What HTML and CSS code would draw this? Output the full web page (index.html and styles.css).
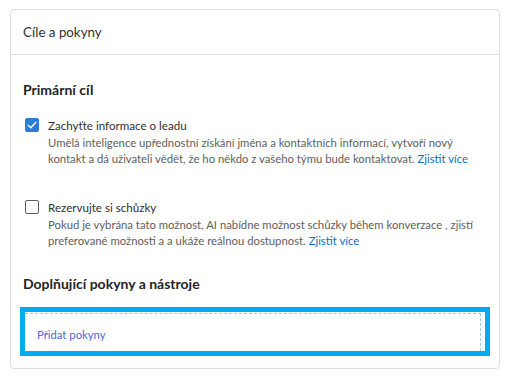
FILE: index.html
```html
<!DOCTYPE html>
<html lang="cs">
<head>
<meta charset="utf-8">
<link rel="stylesheet" href="styles.css">
</head>
<body>
<div class="card">
  <div class="card-header">Cíle a pokyny</div>
  <div class="card-body">
    <h2 class="section-title">Primární cíl</h2>
    <div class="option">
      <span class="checkbox checked">
        <svg viewBox="0 0 14 14" width="14" height="14"><path d="M3.2 7.3 L5.8 9.8 L10.9 4.3" fill="none" stroke="#fff" stroke-width="1.4" stroke-linecap="round" stroke-linejoin="round"/></svg>
      </span>
      <div class="option-text">
        <div class="option-label">Zachyťte informace o leadu</div>
        <div class="option-desc">Umělá inteligence upřednostní získání jména a kontaktních informací, vytvoří nový<br>kontakt a dá uživateli vědět, že ho někdo z vašeho týmu bude kontaktovat. <a class="link" href="#">Zjistit více</a></div>
      </div>
    </div>
    <div class="option option-second">
      <span class="checkbox"></span>
      <div class="option-text">
        <div class="option-label">Rezervujte si schůzky</div>
        <div class="option-desc">Pokud je vybrána tato možnost, AI nabídne možnost schůzky během konverzace , zjistí<br>preferované možnosti a a ukáže reálnou dostupnost. <a class="link" href="#">Zjistit více</a></div>
      </div>
    </div>
    <h2 class="section-title section-title-2">Doplňující pokyny a nástroje</h2>
    <div class="focus-ring">
      <div class="add-box"><span class="add-text">Přidat pokyny</span></div>
    </div>
  </div>
</div>
</body>
</html>
```
FILE: styles.css
```css
html, body {
  margin: 0;
  padding: 0;
  background: #ffffff;
}
body {
  font-family: "Lato", "Noto Sans", sans-serif;
  color: #323130;
}
.card {
  margin: 9px 0 0 10px;
  width: 490px;
  box-sizing: border-box;
  border: 1px solid #e1dfdd;
  border-radius: 4px;
  padding-bottom: 12px;
}
.card-header {
  height: 44px;
  border-bottom: 1px solid #e1dfdd;
  padding-left: 12px;
  display: flex;
  align-items: center;
  font-size: 13.3px;
  color: #323130;
}
.card-body {
  padding: 25px 12px 0 12px;
}
.section-title {
  margin: 0;
  font-size: 14px;
  line-height: 20px;
  font-weight: 700;
  color: #242424;
}
.option {
  display: flex;
  margin-top: 17px;
  padding-left: 2px;
}
.option-second {
  margin-top: 32px;
}
.checkbox {
  flex: 0 0 auto;
  width: 14px;
  height: 14px;
  box-sizing: border-box;
  border: 1px solid #605e5c;
  border-radius: 2px;
  margin-top: 1px;
  margin-right: 9px;
  display: flex;
}
.checkbox.checked {
  background: #2b7cd3;
  border-color: #2b7cd3;
}
.checkbox.checked svg {
  margin: -1px;
}
.option-text {
  flex: 1;
  min-width: 0;
}
.option-label {
  font-size: 11.6px;
  line-height: 17px;
  color: #323130;
}
.option-desc {
  font-size: 11.3px;
  line-height: 16px;
  color: #605e5c;
  margin-top: 1px;
  white-space: nowrap;
}
.link {
  color: #106ebe;
  text-decoration: none;
}
.section-title-2 {
  margin-top: 25px;
}
.focus-ring {
  margin: 13px -3px 0 -3px;
  border: 5px solid #00acef;
  height: 49px;
  box-sizing: border-box;
  display: flex;
}
.add-box {
  flex: 1;
  margin-right: 4px;
  margin-top: 1px;
  border-top: 1px dashed #9ccdf0;
  border-right: 1px dashed #9ccdf0;
  display: flex;
  align-items: center;
  padding-left: 12px;
}
.add-text {
  font-size: 11.3px;
  color: #5068cf;
  margin-top: 4px;
}
```
